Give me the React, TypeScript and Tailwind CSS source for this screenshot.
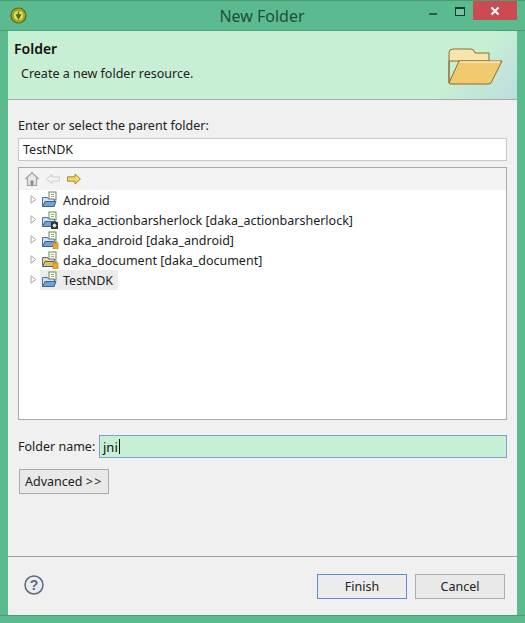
const FolderIcon = ({ overlay, closed }: { overlay?: "lib" | "lock"; closed?: boolean }) => (
  <svg width="18" height="18" viewBox="0 0 18 18" className="shrink-0">
    <rect x="8" y="1" width="7" height="8" fill="#fff" stroke="#5a8f5a" strokeWidth="1" />
    <path d="M10 3.5h3M10 5.5h3" stroke="#c9a23a" strokeWidth="1" />
    <path d="M1.5 6.5h5l1 1.5h6v7h-12z" fill={closed ? "#f2d98c" : "#cfe0f2"} stroke="#5a6f8f" strokeWidth="1" />
    <path d="M1.5 15.5l2.5-5h11l-2 5z" fill={closed ? "#e8bd5c" : "#6fa3d8"} stroke="#3f628f" strokeWidth="1" />
    {overlay === "lib" && <rect x="10" y="11" width="7" height="7" fill="#333" />}
    {overlay === "lib" && <path d="M11.5 14.5h4M13.5 12.5v4M12 13l3 3M15 13l-3 3" stroke="#fff" strokeWidth="0.8" />}
    {overlay === "lock" && <rect x="12" y="12" width="5" height="6" fill="#e8a92c" stroke="#b67c12" strokeWidth="0.6" />}
    {overlay === "lock" && <path d="M13 12v-1.5h3v1.5" fill="none" stroke="#9a9a9a" strokeWidth="1" />}
  </svg>
);

const Row = ({ label, overlay, closed, selected }: { label: string; overlay?: "lib" | "lock"; closed?: boolean; selected?: boolean }) => (
  <div className="flex h-5 items-center pl-[11px]">
    <svg width="7" height="9" viewBox="0 0 7 9" className="mr-[3px] shrink-0">
      <path d="M1 .8 L5.8 4.5 L1 8.2 Z" fill="#fff" stroke="#a6a6a6" strokeWidth="1" />
    </svg>
    <div className={`flex h-5 items-center pl-[1px] pr-[5px] ${selected ? "bg-[#ececec]" : ""}`}>
      <div className="mr-[4px]"><FolderIcon overlay={overlay} closed={closed} /></div>
      <span className="pt-[3px] text-[12.5px] text-[#222]">{label}</span>
    </div>
  </div>
);

export default function App() {
  return (
    <div className="flex h-[623px] w-[525px] flex-col border-t border-[#4a9c75] bg-[#5bbb8e] font-['Noto_Sans','Open_Sans',sans-serif] text-[12.5px] leading-none text-[#1c1c1c]">
      <div className="flex h-[30px] shrink-0 items-center border-b border-[#4a9c75] pl-[10px]">
        <svg width="17" height="17" viewBox="0 0 17 17" className="shrink-0">
          <circle cx="8.5" cy="8.5" r="7.5" fill="#9fa92a" stroke="#5d6418" strokeWidth="1.2" />
          <circle cx="8.5" cy="8.5" r="4.6" fill="#e8e25a" />
          <path d="M8.5 4.5v5M6.5 8l2 3.5 2-3.5z" stroke="#4f6b1d" strokeWidth="1.4" fill="#4f6b1d" />
        </svg>
        <div className="ml-[68px] flex-1 text-center text-[16px] text-[#1d4e3c]">New Folder</div>
        <div className="flex h-full items-start pr-[8px]">
          <div className="mr-[18px] mt-[12px] h-[2px] w-[8px] bg-[#2c5a49]" />
          <div className="mr-[8px] mt-[6px] h-[9px] w-[10px] border border-t-2 border-[#173c32] bg-[#7cc2a0]" />
          <div className="flex h-[19px] w-[44px] items-center justify-center bg-[#cd4a52]">
            <svg width="10" height="10" viewBox="0 0 10 10">
              <path d="M1.5 1.5l7 7M8.5 1.5l-7 7" stroke="#fff" strokeWidth="2" />
            </svg>
          </div>
        </div>
      </div>

      <div className="mx-[8px] flex min-h-0 flex-1 flex-col bg-[#f0f0f0]">
        <div className="flex h-[69px] shrink-0 border-b border-[#a5aca8] bg-[linear-gradient(135deg,#c7efd3_0%,#c7efd3_85%,#bcdde0_100%)]">
          <div className="flex-1 pl-[6px]">
            <div className="mt-[11px] text-[14px] font-semibold text-[#111]">Folder</div>
            <div className="ml-[7px] mt-[12px] text-[12.5px] text-[#222]">Create a new folder resource.</div>
          </div>
          <svg width="56" height="40" viewBox="0 0 56 40" className="mr-[13px] mt-[16px] shrink-0">
            <path d="M1 36 V6 q0-4 4-4 h18 q3 0 4 4 h14 v8 H1z" fill="#f6e4ab" stroke="#8a6d33" strokeWidth="1" />
            <path d="M1 36 L11 14 H54 L43 36 Q42 37 40 37 H2z" fill="#f1c96f" stroke="#8a6d33" strokeWidth="1" />
            <path d="M12 15 H52" stroke="#fbeab8" strokeWidth="1.5" />
          </svg>
        </div>

        <div className="mt-[20px] pl-[10px] text-[12.5px] text-[#222]">Enter or select the parent folder:</div>
        <div className="mx-[10px] mt-[5px] flex h-[23px] items-center border border-[#c8c8c8] bg-white pl-[4px] pt-[3px] text-[12.5px] text-[#222]">TestNDK</div>

        <div className="mx-[10px] mt-[6px] flex h-[253px] shrink-0 flex-col border border-[#a9a9a9] bg-white">
          <div className="flex h-[22px] shrink-0 items-center gap-[5px] bg-[#f3f3f3] pl-[5px]">
            <svg width="16" height="16" viewBox="0 0 16 16">
              <path d="M1.5 8 L8 1.5 L14.5 8 M3.5 7v7.5h9V7" fill="#e6e6e6" stroke="#a3a3a3" strokeWidth="1.2" />
              <rect x="6.5" y="9.5" width="3" height="5" fill="#8e8e8e" />
            </svg>
            <svg width="16" height="12" viewBox="0 0 16 12">
              <path d="M1.5 6 L7 1.5 V4 H14.5 V8 H7 V10.5 Z" fill="#f3f3f3" stroke="#cfcfcf" strokeWidth="1" />
            </svg>
            <svg width="16" height="12" viewBox="0 0 16 12">
              <path d="M14.5 6 L9 1 V3.8 H1.5 V8.2 H9 V11 Z" fill="#f6d56f" stroke="#a98a2a" strokeWidth="1" />
            </svg>
          </div>
          <div>
            <Row label="Android" />
            <Row label="daka_actionbarsherlock [daka_actionbarsherlock]" overlay="lib" />
            <Row label="daka_android [daka_android]" overlay="lock" />
            <Row label="daka_document [daka_document]" overlay="lock" closed />
            <Row label="TestNDK" selected />
          </div>
        </div>

        <div className="mx-[10px] mt-[15px] flex h-[23px] items-center">
          <span className="w-[81px] shrink-0 pt-[2px] text-[12.5px] text-[#222]">Folder name:</span>
          <div className="flex h-[23px] flex-1 items-center border border-[#7aa2d8] bg-[#c7efd3] pl-[3px] text-[13px] text-[#111]">
            <span className="pt-[2px]">jni</span><span className="ml-px h-[15px] w-px bg-[#111]" />
          </div>
        </div>

        <button className="ml-[11px] mt-[11px] h-[25px] w-[90px] border border-[#acacac] bg-[#e9e9e9] pt-[3px] text-center text-[12.5px] text-[#222]">Advanced <span className="tracking-[1.5px]">&gt;&gt;</span></button>

        <div className="mt-[62px] flex flex-1 items-start justify-between border-t border-[#a0a0a0] pl-[16px] pr-[12px] pt-[17px]">
          <svg width="20" height="20" viewBox="0 0 20 20" className="mt-[1px]">
            <circle cx="10" cy="10" r="9" fill="#e8ecf3" stroke="#5f6876" strokeWidth="1.5" />
            <text x="10" y="15" textAnchor="middle" fontSize="14" fontWeight="700" fill="#5f6876" fontFamily="Liberation Sans">?</text>
          </svg>
          <div className="flex gap-[8px]">
            <button className="h-[25px] w-[90px] border border-[#5b8fc9] bg-[#ececec] pt-[2px] text-[12.5px] text-[#222]">Finish</button>
            <button className="h-[25px] w-[90px] border border-[#acacac] bg-[#e9e9e9] pt-[2px] text-[12.5px] text-[#222]">Cancel</button>
          </div>
        </div>
      </div>
      <div className="h-[8px] shrink-0 border-t border-[#4a9c75]" />
    </div>
  );
}
